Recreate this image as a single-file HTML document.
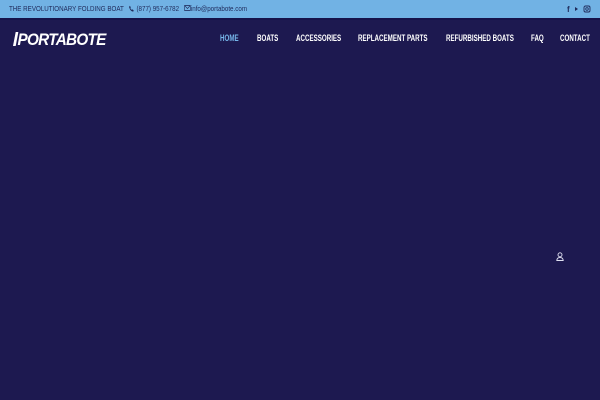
<!DOCTYPE html>
<html><head><meta charset="utf-8"><style>
html,body{margin:0;padding:0;width:600px;height:400px;overflow:hidden;background:#1d1950;font-family:"Liberation Sans",sans-serif;}
.top{position:absolute;left:0;top:0;width:600px;height:18px;background:#71b2e4;border-bottom:2px solid #15124a;}
.top .l{position:absolute;left:9px;top:4px;font-size:7.5px;color:#1f2a5a;white-space:nowrap;transform:scaleX(0.83);transform-origin:left;}
.top .r{position:absolute;right:8px;top:5px;}
.top .r svg{display:block}
.logo{position:absolute;left:13px;top:30px;color:#fff;font-style:italic;font-weight:bold;font-size:17px;letter-spacing:-0.8px;transform:scaleX(0.9);transform-origin:left;}
.nav{position:absolute;top:33px;font-size:9px;font-weight:bold;color:#fff;white-space:nowrap;transform:scaleX(0.69);transform-origin:left;}
</style></head><body>
<div class="top"><div class="l">THE REVOLUTIONARY FOLDING BOAT &nbsp;&nbsp;<svg width="7" height="7" viewBox="0 0 10 10" style="vertical-align:-1px"><path d="M2 1 L4 3 L3 4.5 Q5 7 6 7 L7 6 L9 8 L8 9.5 Q3 9 1 3 Z" fill="#1f2a5a"/></svg> (877) 957-6782 &nbsp;&nbsp;<svg width="8" height="6" viewBox="0 0 8 6" style="vertical-align:0"><rect x="0.5" y="0.5" width="7" height="5" fill="none" stroke="#1f2a5a" stroke-width="0.8"/><path d="M0.5 0.5 L4 3.5 L7.5 0.5" fill="none" stroke="#1f2a5a" stroke-width="0.7"/></svg>info@portabote.com</div>
<div class="r"><svg width="26" height="8" viewBox="0 0 26 8"><text x="1" y="7" font-size="8" font-weight="bold" fill="#1f2a5a" font-family="Liberation Sans">f</text><path d="M9 2 L12 4 L9 6Z" fill="#1f2a5a"/><rect x="18" y="1" width="6" height="6" rx="1.5" fill="none" stroke="#1f2a5a" stroke-width="0.9"/><circle cx="21" cy="4" r="1.3" fill="none" stroke="#1f2a5a" stroke-width="0.8"/></svg></div></div>
<div class="logo"><svg width="6" height="16" viewBox="0 0 6 16" style="vertical-align:-2px;margin-right:-1px"><path d="M3 1 L6 1 L3 15 L0 15 Z" fill="#fff"/></svg>PORTABOTE</div>
<div class="nav" style="left:220px;color:#76b6ea">HOME</div>
<div class="nav" style="left:257px">BOATS</div>
<div class="nav" style="left:296px">ACCESSORIES</div>
<div class="nav" style="left:358px">REPLACEMENT PARTS</div>
<div class="nav" style="left:446px">REFURBISHED BOATS</div>
<div class="nav" style="left:531px">FAQ</div>
<div class="nav" style="left:560px">CONTACT</div>
<svg style="position:absolute;left:556px;top:252px" width="8" height="9" viewBox="0 0 8 9"><circle cx="4" cy="2.8" r="2" fill="none" stroke="#dfe0f0" stroke-width="0.9"/><path d="M0.8 8.5 Q1 5.5 4 5.5 Q7 5.5 7.2 8.5 Z" fill="none" stroke="#dfe0f0" stroke-width="0.9"/></svg>
</body></html>
